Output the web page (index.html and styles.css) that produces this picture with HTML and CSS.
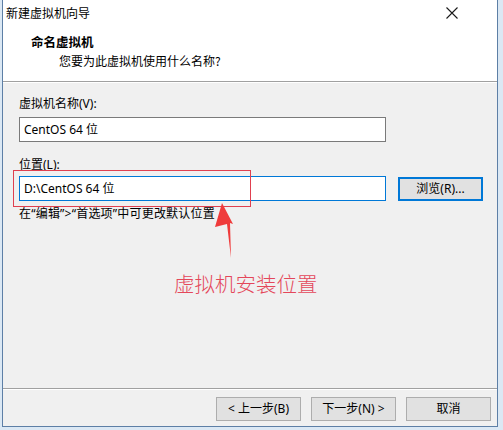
FILE: index.html
```html
<!DOCTYPE html>
<html lang="zh-CN">
<head>
<meta charset="utf-8">
<title>新建虚拟机向导</title>
<link rel="stylesheet" href="styles.css">
</head>
<body>
<div class="window">
  <div class="titlebar">
    <span class="title">新建虚拟机向导</span>
    <svg class="close" width="12" height="12" viewBox="0 0 12 12"><path d="M0.5 0.5 L11.5 11.5 M11.5 0.5 L0.5 11.5" stroke="#1a1a1a" stroke-width="1.1" fill="none"/></svg>
  </div>
  <div class="header">
    <div class="heading">命名虚拟机</div>
    <div class="subheading">您要为此虚拟机使用什么名称?</div>
  </div>
  <div class="body">
    <div class="label">虚拟机名称(V):</div>
    <div class="input">CentOS 64 位</div>
    <div class="label label-loc">位置(L):</div>
    <div class="row">
      <div class="input focused">D:\CentOS 64 位</div>
      <div class="btn browse">浏览(R)...</div>
    </div>
    <div class="hint">在“编辑”&gt;“首选项”中可更改默认位置</div>
  </div>
  <div class="footer">
    <div class="btn">&lt; 上一步(B)</div>
    <div class="btn">下一步(N) &gt;</div>
    <div class="btn">取消</div>
  </div>
  <div class="redbox"></div>
  <svg class="arrow" width="30" height="60" viewBox="0 0 30 60"><polygon points="9,0 20,21 17,20 18,55 14,21 2,24" fill="#ef3b3b"/></svg>
  <div class="note">虚拟机安装位置</div>
</div>
</body>
</html>
```
FILE: styles.css
```css
html, body {
  margin: 0;
  padding: 0;
}
body {
  width: 503px;
  height: 430px;
  background: #dbe8f4;
  font-family: "Noto Sans", "Noto Sans CJK SC", sans-serif;
  font-size: 12px;
  color: #000;
  overflow: hidden;
}
.window {
  position: relative;
  margin-left: 2px;
  width: 494px;
  height: 426px;
  border: 1px solid #5d7fa6;
  border-top: none;
  background: #f0f0f0;
  display: flex;
  flex-direction: column;
}
.titlebar {
  height: 26px;
  background: #fff;
  display: flex;
  align-items: center;
  justify-content: space-between;
  padding: 0 39px 0 3px;
}
.title {
  line-height: 16px;
  font-family: "Noto Sans CJK SC", sans-serif;
}
.close {
  display: block;
}
.header {
  height: 56px;
  box-sizing: border-box;
  background: #fff;
  border-bottom: 1px solid #a0a0a0;
  padding-top: 8px;
}
.heading {
  font-family: "Noto Sans CJK SC", sans-serif;
  font-weight: 700;
  font-size: 12.5px;
  line-height: 16px;
  padding-left: 28px;
}
.subheading {
  font-family: "Noto Sans CJK SC", sans-serif;
  line-height: 16px;
  margin-top: 3px;
  padding-left: 56px;
}
.body {
  flex: 1;
  border-top: 1px solid #fff;
  padding: 13px 0 0 16px;
}
.label {
  line-height: 16px;
}
.label-loc {
  margin-top: 15px;
}
.input {
  box-sizing: border-box;
  width: 367px;
  height: 25px;
  margin-top: 5px;
  background: #fff;
  border: 1px solid #7a7a7a;
  padding-left: 4px;
  line-height: 23px;
}
.row {
  display: flex;
  align-items: center;
  gap: 12px;
  margin-top: 3px;
}
.row .input {
  margin-top: 0;
}
.input.focused {
  border-color: #0078d7;
}
.btn {
  box-sizing: border-box;
  width: 85px;
  height: 24px;
  background: #e1e1e1;
  border: 1px solid #adadad;
  display: flex;
  align-items: center;
  justify-content: center;
  line-height: 16px;
}
.browse {
  border: 2px solid #0078d7;
}
.hint {
  margin-top: 5px;
  line-height: 16px;
  letter-spacing: 0.2px;
}
.footer {
  height: 38px;
  box-sizing: border-box;
  border-top: 1px solid #a0a0a0;
  box-shadow: inset 0 1px 0 #fff;
  display: flex;
  justify-content: flex-end;
  gap: 10px;
  padding: 8px 6px 0 0;
}
.redbox {
  position: absolute;
  left: 10px;
  top: 170px;
  width: 236px;
  height: 35px;
  border: 1px solid #e0404f;
}
.arrow {
  position: absolute;
  left: 210px;
  top: 203px;
}
.note {
  position: absolute;
  left: 171px;
  top: 271px;
  font-family: "Noto Sans CJK SC", sans-serif;
  font-weight: 300;
  font-size: 20.5px;
  line-height: 24px;
  color: #e4475a;
}
```
